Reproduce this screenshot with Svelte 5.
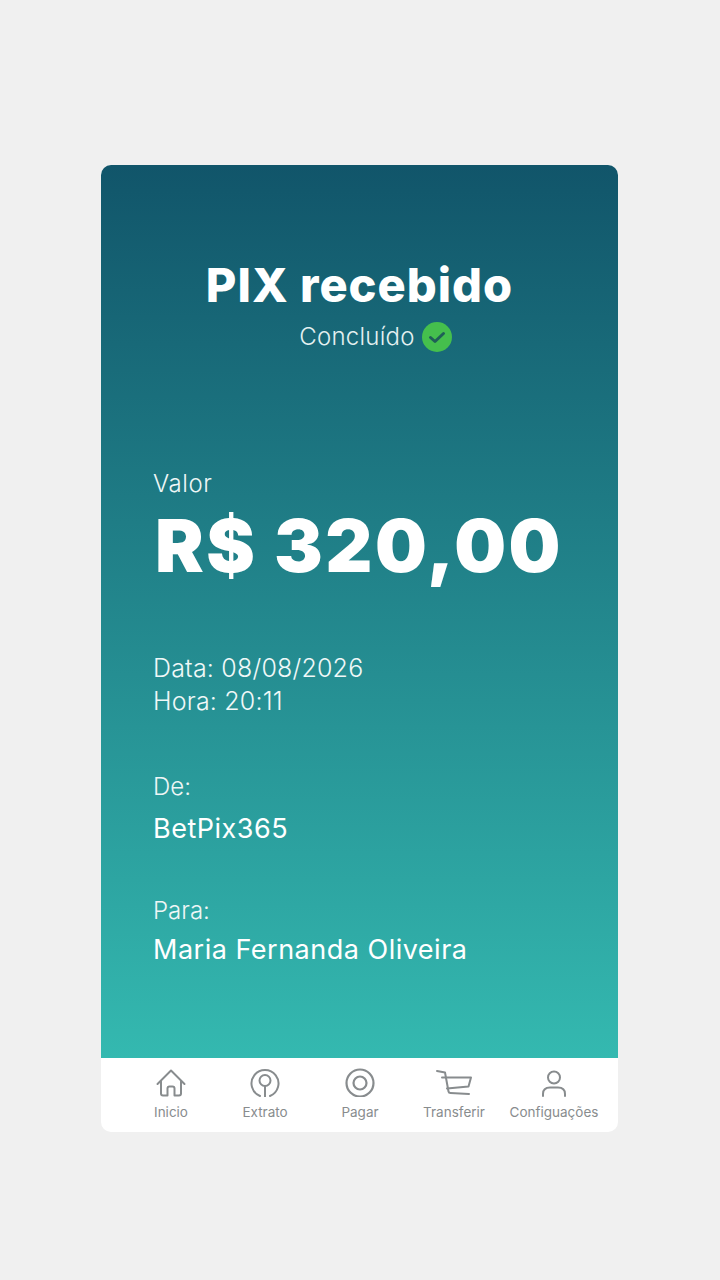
<script lang="ts">
  const details = [
    { label: 'De:', value: 'BetPix365' },
    { label: 'Para:', value: 'Maria Fernanda Oliveira' }
  ];
</script>

<main class="page">
  <section class="card">
    <div class="receipt">
      <header class="head">
        <h1>PIX recebido</h1>
        <p class="status">
          Concluído
          <svg width="30" height="30" viewBox="0 0 30 30" aria-hidden="true">
            <circle cx="15" cy="15" r="15" fill="#45bf4d" />
            <path d="M8.500 15.500l4.500 4 8.500-8" fill="none" stroke="#1f5f57" stroke-width="3" stroke-linecap="round" stroke-linejoin="round" />
          </svg>
        </p>
      </header>

      <div class="amount">
        <span class="label">Valor</span>
        <strong>R$ 320,00</strong>
      </div>

      <div class="when">
        <span>Data: 08/08/2026</span>
        <span>Hora: 20:11</span>
      </div>

      {#each details as d}
        <div class="party">
          <span class="label">{d.label}</span>
          <span class="name">{d.value}</span>
        </div>
      {/each}
    </div>

    <nav class="tabs">
      <div class="tab">
        <svg width="32" height="30" viewBox="0 0 32 30" aria-hidden="true">
          <path d="M2.500 17L16 3.500 29.500 17" />
          <path d="M6 14.500v12q0 2 2 2h4.500v-7q0-2 2-2h3q2 0 2 2v7h4.500q2 0 2-2v-12" />
        </svg>
        <span>Inicio</span>
      </div>
      <div class="tab">
        <svg width="32" height="30" viewBox="0 0 32 30" aria-hidden="true">
          <path d="M11 29a13.500 13.500 0 1 1 10 0" />
          <circle cx="16" cy="13.500" r="5.500" />
          <path d="M16 19v11" />
        </svg>
        <span>Extrato</span>
      </div>
      <div class="tab">
        <svg class="thick" width="32" height="30" viewBox="0 0 32 30" aria-hidden="true">
          <circle cx="16" cy="16" r="13.500" />
          <circle cx="16" cy="16" r="6.500" />
        </svg>
        <span>Pagar</span>
      </div>
      <div class="tab">
        <svg width="38" height="30" viewBox="0 0 38 30" aria-hidden="true">
          <path d="M2 4l8 1.500 3.500 19c.2 1 1 1.500 2 1.500L34 27" />
          <path d="M7 10.500h29l-2.500 9-21.500 2" />
        </svg>
        <span>Transferir</span>
      </div>
      <div class="tab">
        <svg width="32" height="30" viewBox="0 0 32 30" aria-hidden="true">
          <circle cx="16" cy="10.500" r="6" />
          <path d="M5 29v-2c0-4.500 3-6.500 7-6.500h8c4 0 7 2 7 6.500v2" />
        </svg>
        <span>Configuações</span>
      </div>
    </nav>
  </section>
</main>

<style>
  :global(body) {
    margin: 0;
    background: #f0f0f0;
  }

  .page {
    height: 1280px;
    padding: 165px 102px 0 101px;
    box-sizing: border-box;
    font-family: Inter, "Liberation Sans", sans-serif;
  }

  .card {
    height: 967px;
    display: flex;
    flex-direction: column;
    border-radius: 10px;
    overflow: hidden;
    background: #fff;
  }

  .receipt {
    flex: 1;
    padding: 0 52px;
    color: #fff;
    background: linear-gradient(180deg, #11556a 0%, #34b9b0 100%);
  }

  .head {
    padding-top: 94px;
    text-align: center;
  }

  h1 {
    margin: 0;
    font-size: 47px;
    line-height: 52px;
    font-weight: 800;
    letter-spacing: 1px;
    white-space: nowrap;
  }

  .status {
    margin: 11px 0 0;
    padding-left: 32px;
    display: flex;
    align-items: center;
    justify-content: center;
    gap: 7px;
    font-size: 24px;
    line-height: 30px;
    font-weight: 300;
    letter-spacing: 0.25px;
    color: #e4f1f1;
  }

  .amount {
    margin-top: 117px;
    display: flex;
    flex-direction: column;
  }

  .label {
    font-size: 24px;
    line-height: 30px;
    font-weight: 300;
    color: #eef6f6;
  }

  .amount .label {
    letter-spacing: 0.6px;
  }

  .amount strong {
    margin: 2px 0 0 2px;
    font-size: 73px;
    line-height: 90px;
    font-weight: 900;
    letter-spacing: 2.400px;
    white-space: nowrap;
  }

  .when {
    margin-top: 61px;
    display: flex;
    flex-direction: column;
    font-size: 25px;
    line-height: 33px;
    font-weight: 300;
    letter-spacing: 0.2px;
    color: #f0f8f8;
  }

  .party {
    margin-top: 54px;
    display: flex;
    flex-direction: column;
    gap: 11px;
  }

  .party + .party {
    margin-top: 51px;
    gap: 8px;
  }

  .name {
    font-size: 27px;
    line-height: 32px;
    letter-spacing: 0.5px;
    white-space: nowrap;
  }

  .tabs {
    height: 74px;
    flex: none;
    display: grid;
    grid-template-columns: 94px 94px 96px 92px 108px;
    padding: 9px 0 0 23px;
    box-sizing: border-box;
    color: #888c8e;
  }

  .tab {
    display: flex;
    flex-direction: column;
    align-items: center;
    font-size: 13.500px;
    line-height: 18px;
    white-space: nowrap;
  }

  .tab span {
    margin-top: 6px;
  }

  .tab svg {
    fill: none;
    stroke: currentColor;
    stroke-width: 2;
    stroke-linecap: round;
    stroke-linejoin: round;
  }

  .tab svg.thick {
    stroke-width: 2.200;
  }
</style>
